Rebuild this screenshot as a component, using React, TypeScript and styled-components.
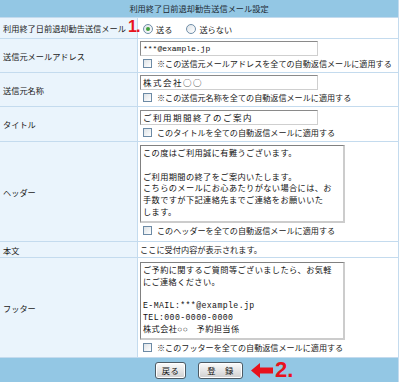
import React from 'react';
import styled, { createGlobalStyle } from 'styled-components';

const GlobalStyle = createGlobalStyle`
  html, body {
    margin: 0;
    padding: 0;
    background: #ffffff;
  }
`;

const LINE = '#c4dbee';
const HEAD_BG = '#93c7e4';
const LABEL_BG = '#eaf4fc';

const Page = styled.div`
  position: relative;
  width: 400px;
  height: 382px;
  overflow: hidden;
  background: #ffffff;
  font-family: 'Noto Sans CJK JP', 'Noto Sans', sans-serif;
  font-size: 8.2px;
  color: #222222;
`;

const Sheet = styled.div`
  width: 398px;
  display: grid;
  grid-template-columns: 137px 1fr;
  gap: 1px;
  background: ${LINE};
  border-right: 1px solid ${LINE};
`;

const Caption = styled.div`
  grid-column: 1 / -1;
  height: 17px;
  line-height: 17px;
  text-align: center;
  background: ${HEAD_BG};
  color: #1d2a33;
`;

const Label = styled.div`
  display: flex;
  align-items: center;
  padding-left: 3px;
  background: ${LABEL_BG};
  white-space: nowrap;
  overflow: hidden;
`;

const Value = styled.div<{ $pad?: string }>`
  display: flex;
  flex-direction: column;
  align-items: flex-start;
  min-width: 0;
  padding: ${p => p.$pad ?? '2px 2px 1px 2px'};
  background: #ffffff;
`;

const RadioRow = styled.div`
  display: flex;
  align-items: center;
  height: 17px;
  padding-left: 3px;
  gap: 14px;
`;

const RadioItem = styled.span`
  display: inline-flex;
  align-items: center;
  gap: 3px;
`;

const RadioDot = styled.span<{ $on?: boolean }>`
  position: relative;
  width: 8px;
  height: 8px;
  border-radius: 50%;
  border: 1px solid #6f8ea8;
  background: linear-gradient(135deg, #dfe4e8, #ffffff);
  &::after {
    content: '';
    display: ${p => (p.$on ? 'block' : 'none')};
    position: absolute;
    left: 2px;
    top: 2px;
    width: 4px;
    height: 4px;
    border-radius: 50%;
    background: #3fa03a;
  }
`;

const TextBox = styled.div<{ $width: number; $mono?: boolean; $tracking?: number }>`
  box-sizing: border-box;
  width: ${p => p.$width}px;
  height: 15px;
  line-height: 13px;
  padding: 0 2px;
  border: 1px solid #8a8a8a;
  border-right-color: #cfcfcf;
  border-bottom-color: #cfcfcf;
  background: #ffffff;
  font-family: ${p => (p.$mono ? "'Liberation Mono', 'Noto Sans CJK JP', monospace" : "'Noto Sans CJK JP', sans-serif")};
  font-size: ${p => (p.$mono ? '8px' : '8.5px')};
  letter-spacing: ${p => p.$tracking ?? 0}px;
  color: #111111;
  white-space: nowrap;
`;

const AreaBox = styled.div`
  box-sizing: border-box;
  width: 205px;
  height: 78px;
  padding: 2px 2px;
  border: 1px solid #808080;
  border-right: 2px solid #cccccc;
  border-bottom: 2px solid #cccccc;
  background: #ffffff;
  font-family: 'Liberation Mono', 'Noto Sans CJK JP', monospace;
  font-size: 8.2px;
  letter-spacing: 0.4px;
  line-height: 11.8px;
  color: #111111;
  white-space: pre;
  overflow: hidden;
`;

const CheckRow = styled.div`
  display: flex;
  align-items: center;
  gap: 5px;
  height: 15px;
  padding-left: 3px;
  white-space: nowrap;
  font-size: 8.1px;
`;

const CheckBox = styled.span`
  box-sizing: border-box;
  flex: none;
  width: 9px;
  height: 9px;
  border: 1px solid #6c8aa5;
  background: linear-gradient(135deg, #dde2e6, #ffffff);
`;

const Note = styled.div`
  height: 13px;
  line-height: 13px;
  white-space: nowrap;
`;

const Footer = styled.div`
  grid-column: 1 / -1;
  position: relative;
  display: flex;
  justify-content: center;
  align-items: center;
  gap: 12px;
  height: 24px;
  background: ${HEAD_BG};
`;

const Button = styled.button<{ $width: number }>`
  box-sizing: border-box;
  width: ${p => p.$width}px;
  height: 17px;
  padding: 0;
  border: 1px solid #4d5a63;
  border-radius: 3px;
  background: linear-gradient(#fbfbfb, #e2e2e2 60%, #cfcfcf);
  box-shadow: inset 0 0 0 1px #ffffff;
  font-family: 'Noto Sans CJK JP', sans-serif;
  font-size: 8.3px;
  color: #111111;
  letter-spacing: 0.5px;
  cursor: pointer;
`;

const Marker = styled.span<{ $size: number }>`
  font-family: 'Liberation Sans', Arial, sans-serif;
  font-weight: bold;
  font-size: ${p => p.$size}px;
  line-height: 1;
  color: #e8121c;
`;

const StepOne = styled(Marker)`
  position: absolute;
  left: 128px;
  top: 19px;
  letter-spacing: -1px;
`;

const StepTwo = styled.div`
  position: absolute;
  left: 251px;
  top: 0;
  bottom: 0;
  display: flex;
  align-items: center;
  gap: 2px;
`;

const Check = ({ text }: { text: string }) => (
  <CheckRow>
    <CheckBox />
    <span>{text}</span>
  </CheckRow>
);

const headerText = `この度はご利用誠に有難うございます。

ご利用期間の終了をご案内いたします。
こちらのメールにお心あたりがない場合には、お
手数ですが下記連絡先までご連絡をお願いいた
します。`;

const footerText = `ご予約に関するご質問等ございましたら、お気軽
にご連絡ください。

E-MAIL:***@example.jp
TEL:000-0000-0000
株式会社○○　予約担当係`;

export default function App() {
  return (
    <Page>
      <GlobalStyle />
      <Sheet>
        <Caption>利用終了日前退却勧告送信メール設定</Caption>

        <Label>利用終了日前退却勧告送信メール</Label>
        <Value $pad="2px 2px 1px 2px">
          <RadioRow>
            <RadioItem>
              <RadioDot $on />
              送る
            </RadioItem>
            <RadioItem>
              <RadioDot />
              送らない
            </RadioItem>
          </RadioRow>
        </Value>

        <Label>送信元メールアドレス</Label>
        <Value>
          <TextBox $width={178} $mono>
            ***@example.jp
          </TextBox>
          <Check text="※この送信元メールアドレスを全ての自動返信メールに適用する" />
        </Value>

        <Label>送信元名称</Label>
        <Value>
          <TextBox $width={178} $tracking={1.5}>
            株式会社○○
          </TextBox>
          <Check text="※この送信元名称を全ての自動返信メールに適用する" />
        </Value>

        <Label>タイトル</Label>
        <Value $pad="3px 2px 1px 2px">
          <TextBox $width={178} $tracking={1.5}>
            ご利用期間終了のご案内
          </TextBox>
          <Check text="このタイトルを全ての自動返信メールに適用する" />
        </Value>

        <Label>ヘッダー</Label>
        <Value $pad="3px 2px 3px 2px">
          <AreaBox>{headerText}</AreaBox>
          <Check text="このヘッダーを全ての自動返信メールに適用する" />
        </Value>

        <Label>本文</Label>
        <Value $pad="1px 2px 1px 2px">
          <Note>ここに受付内容が表示されます。</Note>
        </Value>

        <Label>フッター</Label>
        <Value $pad="4px 2px 2px 2px">
          <AreaBox>{footerText}</AreaBox>
          <Check text="※このフッターを全ての自動返信メールに適用する" />
        </Value>

        <Footer>
          <Button $width={31}>戻る</Button>
          <Button $width={45}>登　録</Button>
          <StepTwo>
            <svg width="22" height="15" viewBox="0 0 22 15">
              <polygon points="0,7.5 9,0 9,4.5 22,4.5 22,10.5 9,10.5 9,15" fill="#e8121c" />
            </svg>
            <Marker $size={22}>2.</Marker>
          </StepTwo>
        </Footer>
      </Sheet>
      <StepOne $size={16}>1.</StepOne>
    </Page>
  );
}
